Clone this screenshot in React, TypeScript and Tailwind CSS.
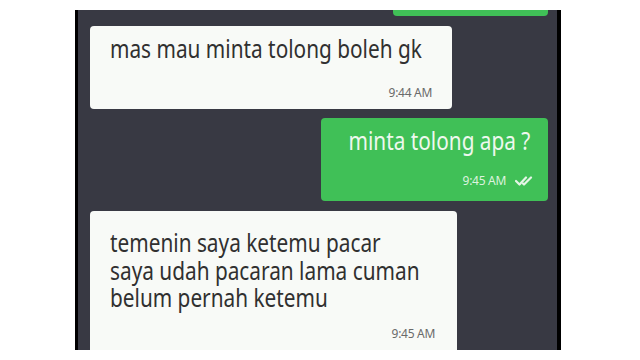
import React from 'react'

const font = { fontFamily: '"Noto Sans", "Open Sans", sans-serif' }

const DoubleCheck = () => (
  <svg width="21" height="10" viewBox="0 0 21 10" fill="none" stroke="#e4f5e6" strokeWidth="2.2" strokeLinecap="round" strokeLinejoin="round">
    <path d="M1 5 L4.5 8.5 L11 1.5" />
    <path d="M8 7.5 L9 8.5 L16 1.5" />
  </svg>
)

const Line = ({ children }: { children: React.ReactNode }) => (
  <div className="h-[27.5px] leading-[27.5px] whitespace-nowrap">
    <span className="inline-block origin-left scale-x-[0.8] text-[26px] text-[#303030]">{children}</span>
  </div>
)

const Time = ({ t, light }: { t: string; light?: boolean }) => (
  <span className={`inline-block text-[12px] leading-none tracking-[-0.3px] ${light ? 'text-[#dcf3df]' : 'text-[#6a6a6a]'}`}>
    {t}
  </span>
)

export default function App() {
  return (
    <div className="w-[640px] h-[360px] bg-white pt-[10px] pl-[75px]" style={font}>
      <div className="w-[486px] h-[340px] bg-[#383943] border-l-[3px] border-r-[4px] border-black overflow-hidden flex flex-col">
        {/* previous outgoing message, cut off */}
        <div className="self-end mr-[9px] mt-[-34px] w-[155px] h-[40px] shrink-0 rounded-[4px] bg-[#40c057]" />

        <div className="ml-[12px] mt-[10px] w-[362px] h-[83px] shrink-0 rounded-[4px] bg-[#f8faf7] pl-[20px] pr-[20px] pt-[9px] flex flex-col">
          <Line>mas mau minta tolong boleh gk</Line>
          <div className="flex justify-end mt-[24px]">
            <Time t="9:44 AM" />
          </div>
        </div>

        <div className="self-end mr-[9px] mt-[9px] w-[227px] h-[83px] shrink-0 rounded-[4px] bg-[#40c057] pr-[18px] pt-[9px] flex flex-col">
          <div className="h-[27.5px] leading-[27.5px] whitespace-nowrap flex justify-end">
            <span className="inline-block origin-right scale-x-[0.8] text-[26px] text-[#eef8ee]">minta tolong apa ?</span>
          </div>
          <div className="flex justify-end items-center gap-[9px] mt-[20px] mr-[-6px]">
            <Time t="9:45 AM" light />
            <DoubleCheck />
          </div>
        </div>

        <div className="ml-[12px] mt-[10px] w-[367px] h-[150px] shrink-0 rounded-[4px] bg-[#f8faf7] pl-[20px] pr-[22px] pt-[18px] flex flex-col">
          <Line>temenin saya ketemu pacar</Line>
          <Line>saya udah pacaran lama cuman</Line>
          <Line>belum pernah ketemu</Line>
          <div className="flex justify-end mt-[16px]">
            <Time t="9:45 AM" />
          </div>
        </div>
      </div>
    </div>
  )
}
